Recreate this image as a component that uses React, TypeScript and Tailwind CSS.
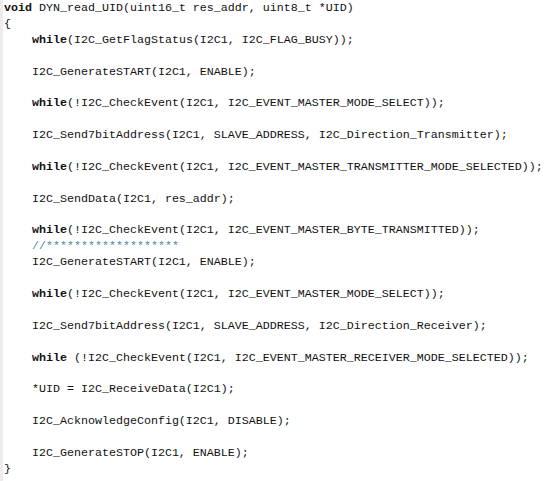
import React from 'react'

type Tok = { t: string; kw?: boolean; c?: boolean }

const I = '    '

const lines: Tok[][] = [
    [{ t: 'void', kw: true }, { t: ' DYN_read_UID(uint16_t res_addr, uint8_t *UID)' }],
    [{ t: '{' }],
    [{ t: I }, { t: 'while', kw: true }, { t: '(I2C_GetFlagStatus(I2C1, I2C_FLAG_BUSY));' }],
    [],
    [{ t: I + 'I2C_GenerateSTART(I2C1, ENABLE);' }],
    [],
    [{ t: I }, { t: 'while', kw: true }, { t: '(!I2C_CheckEvent(I2C1, I2C_EVENT_MASTER_MODE_SELECT));' }],
    [],
    [{ t: I + 'I2C_Send7bitAddress(I2C1, SLAVE_ADDRESS, I2C_Direction_Transmitter);' }],
    [],
    [{ t: I }, { t: 'while', kw: true }, { t: '(!I2C_CheckEvent(I2C1, I2C_EVENT_MASTER_TRANSMITTER_MODE_SELECTED));' }],
    [],
    [{ t: I + 'I2C_SendData(I2C1, res_addr);' }],
    [],
    [{ t: I }, { t: 'while', kw: true }, { t: '(!I2C_CheckEvent(I2C1, I2C_EVENT_MASTER_BYTE_TRANSMITTED));' }],
    [{ t: I }, { t: '//*******************', c: true }],
    [{ t: I + 'I2C_GenerateSTART(I2C1, ENABLE);' }],
    [],
    [{ t: I }, { t: 'while', kw: true }, { t: '(!I2C_CheckEvent(I2C1, I2C_EVENT_MASTER_MODE_SELECT));' }],
    [],
    [{ t: I + 'I2C_Send7bitAddress(I2C1, SLAVE_ADDRESS, I2C_Direction_Receiver);' }],
    [],
    [{ t: I }, { t: 'while', kw: true }, { t: ' (!I2C_CheckEvent(I2C1, I2C_EVENT_MASTER_RECEIVER_MODE_SELECTED));' }],
    [],
    [{ t: I + '*UID = I2C_ReceiveData(I2C1);' }],
    [],
    [{ t: I + 'I2C_AcknowledgeConfig(I2C1, DISABLE);' }],
    [],
    [{ t: I + 'I2C_GenerateSTOP(I2C1, ENABLE);' }],
    [{ t: '}' }],
]

const App: React.FC = () => {
    return (
        <div className="flex w-[556px] h-[481px] bg-white overflow-hidden">
            {/* editor gutter strip */}
            <div className="w-[3px] shrink-0 bg-[#ececec]"></div>
            <pre className="pl-[1px] pt-[1px] text-[11.67px] leading-[15.9px] text-[#111] font-['Liberation_Mono','Courier_New',monospace] whitespace-pre">
                {lines.map((line, idx) => (
                    <div key={idx} className="h-[15.9px]">
                        {line.map((tok, j) => (
                            <span
                                key={j}
                                className={tok.kw ? 'font-bold' : tok.c ? 'text-[#4f86a8]' : ''}
                            >
                                {tok.t}
                            </span>
                        ))}
                    </div>
                ))}
            </pre>
        </div>
    )
}

export default App
